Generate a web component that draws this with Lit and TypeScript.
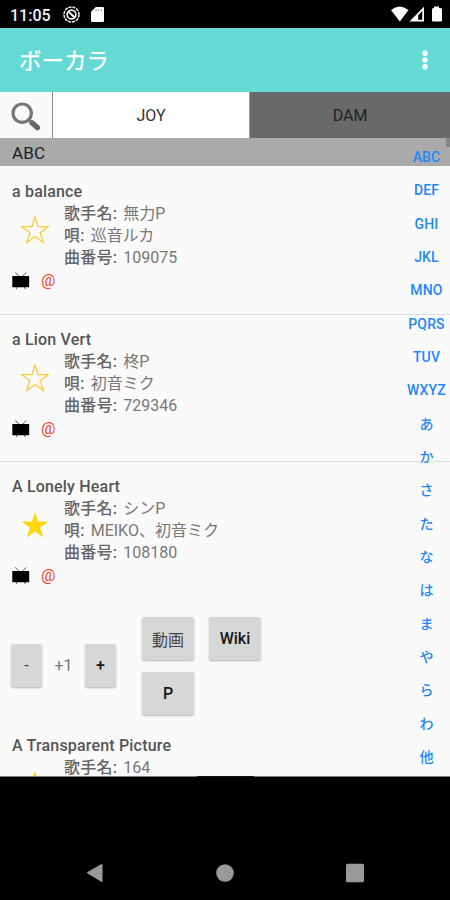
import { LitElement, html, svg, css } from "lit";
import { customElement, property } from "lit/decorators.js";

interface Song {
  title: string;
  artist: string;
  vocal?: string;
  code?: string;
  starred: boolean;
  expanded?: boolean;
}

const SONGS: Song[] = [
  { title: "a balance", artist: "無力P", vocal: "巡音ルカ", code: "109075", starred: false },
  { title: "a Lion Vert", artist: "柊P", vocal: "初音ミク", code: "729346", starred: false },
  { title: "A Lonely Heart", artist: "シンP", vocal: "MEIKO、初音ミク", code: "108180", starred: true, expanded: true },
  { title: "A Transparent Picture", artist: "164", starred: true },
];

const INDEX = ["ABC", "DEF", "GHI", "JKL", "MNO", "PQRS", "TUV", "WXYZ",
  "あ", "か", "さ", "た", "な", "は", "ま", "や", "ら", "わ", "他"];

const STAR = "M14 1 L17.1 10.6 H27.4 L19.1 16.7 L22.3 26.6 L14 20.5 L5.7 26.6 L8.9 16.7 L0.6 10.6 H10.9 Z";

@customElement("song-row")
class SongRow extends LitElement {
  @property({ attribute: false }) song!: Song;

  static styles = css`
    :host { display: block; }
    .row { height: 147.5px; box-sizing: border-box; padding: 14px 0 0 12px; border-bottom: 1px solid #dedede; }
    .row.open { height: 147px; border-bottom: 0; }
    .title { font-size: 16px; line-height: 22px; font-weight: 500; color: #555; letter-spacing: 0.18px; white-space: nowrap; }
    .body { display: flex; height: 66px; }
    .star { width: 28px; height: 28px; margin: 13px 0 0 9px; flex: none; }
    .lines { margin-left: 15px; font-size: 16px; line-height: 22px; color: #777; white-space: nowrap; }
    .lines > div { height: 22px; }
    .label { font-weight: 500; color: #666; letter-spacing: 0.25px; margin-right: 2px; }
    .marks { display: flex; align-items: center; height: 24px; }
    .tv { width: 18px; height: 18px; }
    .at { margin-left: 11px; font-size: 16px; line-height: 24px; color: #f6401f; }
    .panel { display: flex; height: 112px; box-sizing: border-box; padding-left: 11px; }
    .key { display: flex; align-items: center; justify-content: center; height: 43px; border-radius: 2px;
      background: #d6d8d7; color: #171717; font-size: 16px; font-weight: 500; box-shadow: 0 1px 2px rgba(0, 0, 0, 0.28); }
    .small { width: 31px; }
    .wide { width: 52px; }
    .soft { color: #444; font-weight: 400; }
    .step { display: flex; align-items: center; height: 43px; margin-top: 35px; }
    .count { width: 43px; text-align: center; font-size: 16px; color: #777; }
    .links { display: grid; grid-template-columns: 52px 52px; gap: 12px 15px; margin: 8px 0 0 26px; height: 98px; }
  `;

  render() {
    const s = this.song;
    return html`
      <div class="row ${s.expanded ? "open" : ""}">
        <div class="title">${s.title}</div>
        <div class="body">
          <svg class="star" viewBox="0 0 28 28">
            ${s.starred
              ? svg`<path d=${STAR} fill="#ffd60a" />`
              : svg`<path d=${STAR} fill="none" stroke="#fbcb3c" stroke-width="1.3" />`}
          </svg>
          <div class="lines">
            <div><span class="label">歌手名:</span> ${s.artist}</div>
            ${s.vocal ? html`<div><span class="label">唄:</span> ${s.vocal}</div>` : null}
            ${s.code ? html`<div><span class="label">曲番号:</span> ${s.code}</div>` : null}
          </div>
        </div>
        ${s.code ? html`
          <div class="marks">
            <svg class="tv" viewBox="0 0 18 18">
              <path d="M3.3 .4 L7.2 4.5 M14.2 .4 L10.3 4.5 M5 15 L4.2 17.2 M12.5 15 L13.3 17.2" stroke="#555" stroke-width="1" fill="none" />
              <rect x=".3" y="4" width="16.9" height="11.3" rx=".6" fill="#000" />
            </svg>
            <span class="at">@</span>
          </div>` : null}
      </div>
      ${s.expanded ? html`
        <div class="panel">
          <div class="step">
            <div class="key small soft">-</div>
            <div class="count">+1</div>
            <div class="key small">+</div>
          </div>
          <div class="links">
            <div class="key wide soft">動画</div>
            <div class="key wide">Wiki</div>
            <div class="key wide">P</div>
          </div>
        </div>` : null}
    `;
  }
}

@customElement("app-root")
class AppRoot extends LitElement {
  static styles = css`
    :host { display: flex; flex-direction: column; width: 450px; height: 900px; overflow: hidden; background: #000;
      font-family: Roboto, "Noto Sans CJK JP", sans-serif; }
    .status { display: flex; align-items: center; height: 28px; box-sizing: border-box; padding: 2px 7px 0 10px; color: #f2f2f2;
      font-size: 16px; font-weight: 500; }
    .ring { width: 17px; height: 17px; margin: -2px 0 0 12px; }
    .card { width: 13px; height: 15px; margin: -1px 0 0 11px; }
    .signals { width: 52px; height: 16px; margin: -2px 0 0 auto; }
    .bar { display: flex; align-items: center; justify-content: space-between; height: 64px; box-sizing: border-box;
      padding: 0 20px 0 19px; background: #64d9d6; color: #fff; }
    .name { font-size: 22.5px; line-height: 32px; font-weight: 400; margin-top: 2px; -webkit-text-stroke: 0.25px #fff; }
    .more { width: 10px; height: 22px; }
    .tabs { display: flex; height: 46px; background: #fafafa; }
    .find { width: 53px; box-sizing: border-box; padding: 10px 0 0 11px; border-right: 1px solid #8d8d8d; }
    .lens { display: block; width: 31px; height: 30px; }
    .tab { display: flex; align-items: center; justify-content: center; font-size: 16px; color: #333; background: #fff; width: 196px; padding-top: 1px; box-sizing: border-box; }
    .tab.off { flex: 1; background: #696969; color: #222; border-left: 1px solid #999; }
    .content { position: relative; height: 638px; background: #fafafa; overflow: hidden; }
    .head { height: 28px; box-sizing: border-box; padding: 2px 12px 0; margin-bottom: 1px; background: #aaa; font-size: 17px; line-height: 27px; color: #1d1d1d; letter-spacing: 0.2px; }
    .index { position: absolute; top: 3px; right: 0; width: 47px; text-align: center; color: #1e88fb; font-size: 14px; font-weight: 500; letter-spacing: 0.15px; }
    .index div { height: 33.33px; line-height: 33.33px; white-space: nowrap; }
    .thumb { position: absolute; top: 0; right: 0; width: 4px; height: 9px; background: #858585; }
    .edge { height: 1px; flex: none; background: #777; }
    .notch { width: 57px; height: 1px; margin-left: 197px; background: #111; }
    .nav { display: flex; justify-content: space-between; margin-top: auto; height: 56px; box-sizing: border-box; padding: 19px 85.5px 0 86px; }
    .nav svg { width: 20px; height: 20px; }
  `;

  render() {
    return html`
      <div class="status">
        <span>11:05</span>
        <svg class="ring" viewBox="0 0 17 17" fill="none" stroke="#eee">
          <circle cx="8.5" cy="8.5" r="7.5" stroke-width="1.5" stroke-dasharray="3.2 .8" />
          <circle cx="8.5" cy="8.5" r="4.4" stroke-width="1.7" />
          <path d="M5.3 5.5 L11.7 11.5" stroke-width="2.2" />
        </svg>
        <svg class="card" viewBox="0 0 13 15">
          <path d="M4.8 0 H11.7 Q13 0 13 1.3 V13.7 Q13 15 11.7 15 H1.3 Q0 15 0 13.7 V4.8 Z" fill="#fff" />
          <path d="M5.2 2.3 V4.2 M7.8 2.3 V4.2 M10.4 2.3 V4.2" stroke="#888" stroke-width="1" />
        </svg>
        <svg class="signals" viewBox="0 0 52 16" fill="#fff">
          <path d="M0 4 Q8.5 -3 17.5 4 L8.8 15.5 Z" />
          <path d="M33 .8 V15.5 H18.5 Z M31.3 5 L27.2 9.2 V13.8 H31.3 Z" fill-rule="evenodd" />
          <path d="M43 2 V.5 H48 V2 H49.5 Q51 2 51 3.5 V14.3 Q51 15.5 49.8 15.5 H42.2 Q41 15.5 41 14.3 V3.5 Q41 2 42.5 2 Z" />
        </svg>
      </div>
      <div class="bar">
        <span class="name">ボーカラ</span>
        <svg class="more" viewBox="0 0 10 22" fill="#fff">
          <circle cx="5" cy="4.2" r="2.7" /><circle cx="5" cy="11" r="2.7" /><circle cx="5" cy="17.8" r="2.7" />
        </svg>
      </div>
      <div class="tabs">
        <div class="find">
          <svg class="lens" viewBox="0 0 31 30" fill="none">
            <path d="M21 20.8 L26.4 25.6" stroke="#666" stroke-width="5.4" stroke-linecap="round" />
            <path d="M17.7 17.5 L21 20.6" stroke="#777" stroke-width="2.8" />
            <circle cx="11.2" cy="11.2" r="9.2" stroke="#777" stroke-width="3.2" />
          </svg>
        </div>
        <div class="tab">JOY</div>
        <div class="tab off">DAM</div>
      </div>
      <div class="content">
        <div class="head">ABC</div>
        ${SONGS.map((s) => html`<song-row .song=${s}></song-row>`)}
        <div class="index">${INDEX.map((t) => html`<div>${t}</div>`)}</div>
        <div class="thumb"></div>
      </div>
      <div class="edge"><div class="notch"></div></div>
      <div class="nav">
        <svg viewBox="0 0 20 20"><path d="M1.2 9.7 L16 1.3 V18.7 Z" fill="#999" stroke="#999" stroke-linejoin="round" /></svg>
        <svg viewBox="0 0 20 20"><circle cx="10" cy="10" r="8.8" fill="#999" /></svg>
        <svg viewBox="0 0 20 20"><rect x="1" y=".8" width="18" height="18.4" rx="1.5" fill="#999" /></svg>
      </div>
    `;
  }
}
